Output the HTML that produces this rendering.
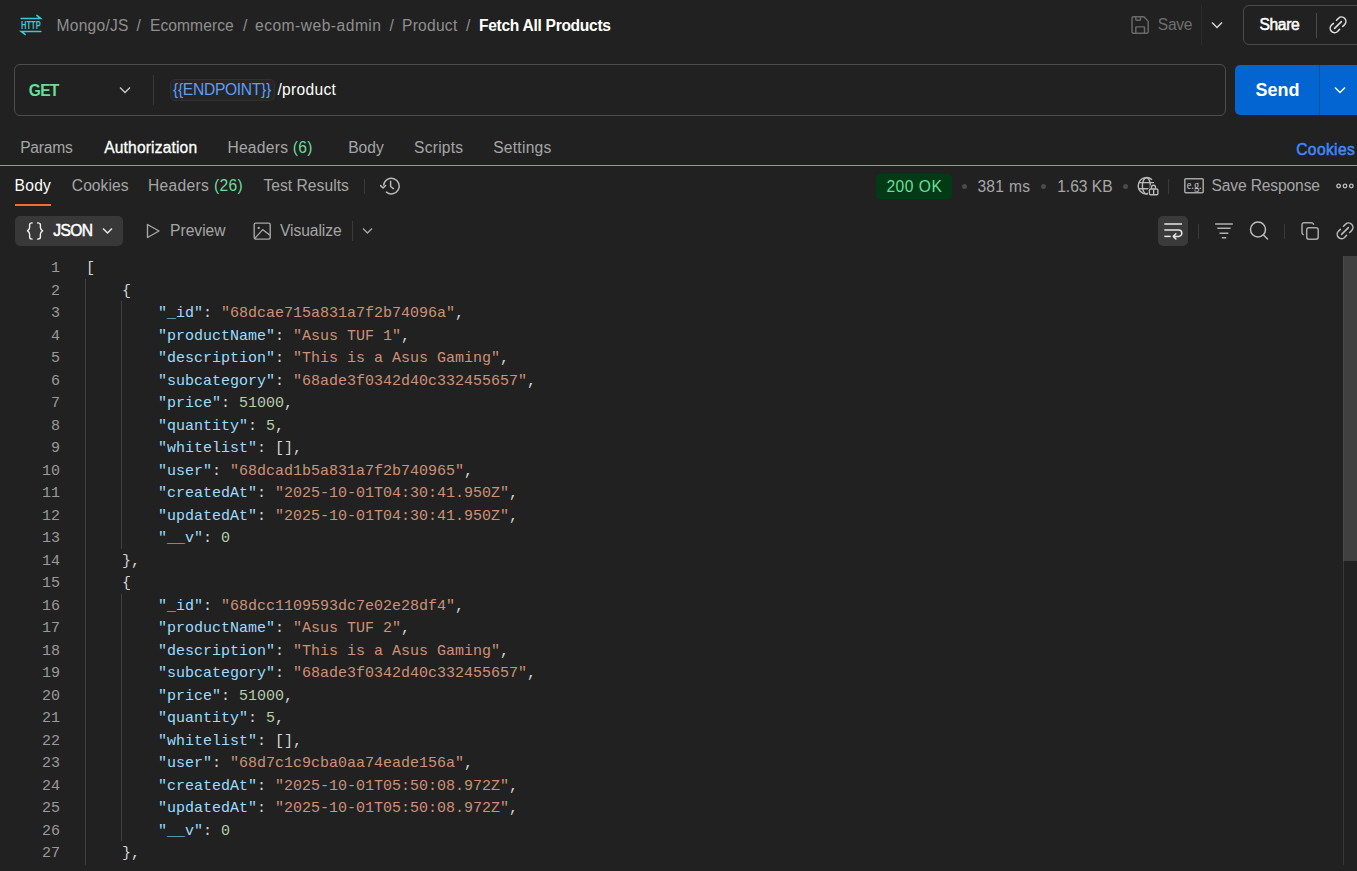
<!DOCTYPE html>
<html><head><meta charset="utf-8">
<style>
*{box-sizing:border-box;margin:0;padding:0}
html,body{width:1357px;height:871px;overflow:hidden;background:#212121;font-family:"Liberation Sans",sans-serif;color:#a6a6a6;position:relative}
.t{position:absolute;white-space:nowrap;line-height:20px}
.b{position:absolute}
svg{position:absolute;overflow:visible}
.code{position:absolute;left:0;top:258px;width:1343px;height:615px;font-family:"Liberation Mono",monospace;font-size:15px}
.ln{position:absolute;left:0;width:60px;text-align:right;color:#9a9a9a;line-height:22.5px;white-space:pre}
.cl{position:absolute;left:86px;color:#d4d4d4;white-space:pre;line-height:22.5px}
.k{color:#9cdcfe}
.s{color:#ce9178}
.n{color:#b5cea8}
.p{color:#d4d4d4}
.g{position:absolute;width:1px;background:#404040}
</style></head><body>
<!-- ===== top bar ===== -->
<svg style="left:20px;top:14px" width="24" height="22" viewBox="0 0 24 22">
  <g fill="none" stroke="#3fc8dc" stroke-width="1.6" stroke-linecap="round">
   <path d="M1.2 4.5H20.6L16.8 1.4"/>
   <path d="M20.8 17.5H1.3L5.1 20.4"/>
  </g>
  <text x="10.9" y="15.1" font-family="Liberation Sans" font-size="11.4" font-weight="bold" fill="#3fc8dc" text-anchor="middle" textLength="19.6" lengthAdjust="spacingAndGlyphs">HTTP</text>
</svg>
<!-- save icon -->
<svg style="left:1131px;top:16px" width="18" height="18" viewBox="0 0 18 18">
 <g fill="none" stroke="#6b6b6b" stroke-width="1.4" stroke-linejoin="round">
  <path d="M2.5 0.7H12.9L17.2 5.4V15.8Q17.2 17.2 15.8 17.2H2.4Q1 17.2 1 15.8V2.2Q1 0.7 2.5 0.7Z"/>
  <path d="M4.8 0.7V3.6Q4.8 4.3 5.5 4.3H8.8Q9.5 4.3 9.5 3.6V0.7"/>
  <path d="M4.8 17.2V11.6Q4.8 10.9 5.5 10.9H12.8Q13.5 10.9 13.5 11.6V17.2"/>
 </g>
</svg>
<div class="b" style="left:1201px;top:5px;width:1px;height:40px;background:#2b2b2b"></div>
<svg style="left:1211px;top:21px" width="12" height="8" viewBox="0 0 12 8"><path d="M1 1.5L6 6.5L11 1.5" fill="none" stroke="#d6d6d6" stroke-width="1.5"/></svg>
<div class="b" style="left:1243px;top:5px;width:130px;height:40px;border:1px solid #4a4a4a;border-radius:6px"></div>
<div class="b" style="left:1316px;top:13px;width:1px;height:25px;background:#4a4a4a"></div>
<svg style="left:1328px;top:15px" width="20" height="20" viewBox="0 0 20 20">
 <g fill="none" stroke="#e2e2e2" stroke-width="1.5" stroke-linecap="round">
  <path d="M6.6 13.4L13.4 6.6"/>
  <path d="M8.5 5.2L10.49 3.24A4.4 4.4 0 0 1 16.71 9.46L14.7 11.5"/>
  <path d="M5.4 8.4L3.39 10.24A4.4 4.4 0 0 0 9.61 16.46L11.6 14.3"/>
 </g>
</svg>
<!-- ===== url row ===== -->
<div class="b" style="left:14px;top:64px;width:1212px;height:52px;border:1px solid #4d4d4d;border-radius:6px"></div>
<svg style="left:119px;top:86px" width="12" height="8" viewBox="0 0 12 8"><path d="M1 1.5L6 6.5L11 1.5" fill="none" stroke="#c8c8c8" stroke-width="1.4"/></svg>
<div class="b" style="left:153px;top:75px;width:1px;height:30px;background:#3a3a3a"></div>
<div class="b" style="left:170px;top:79px;width:105px;height:22px;background:#262626;border:1px solid #303030;border-radius:5px"></div>
<div class="b" style="left:1235px;top:65px;width:130px;height:50px;background:#0265d2;border-radius:5px"></div>
<div class="b" style="left:1319px;top:65px;width:1px;height:50px;background:#0a4e9c"></div>
<svg style="left:1334px;top:86px" width="12" height="8" viewBox="0 0 12 8"><path d="M1 1.5L6 6.5L11 1.5" fill="none" stroke="#ffffff" stroke-width="1.4"/></svg>
<!-- ===== tabs ===== -->
<div class="b" style="left:0;top:165px;width:1357px;height:1px;background:#6a9ee6"></div>
<!-- ===== response tabs ===== -->
<div class="b" style="left:15px;top:204px;width:36px;height:2px;background:#f26b3a"></div>
<div class="b" style="left:364px;top:179px;width:1px;height:15px;background:#3a3a3a"></div>
<svg style="left:380px;top:177px" width="20" height="18" viewBox="0 0 20 18">
 <g fill="none" stroke="#b8b8b8" stroke-width="1.5" stroke-linecap="round" stroke-linejoin="round">
  <path d="M6.42 15.15A7.8 7.8 0 1 0 3.69 7.97"/>
  <path d="M0.6 8.6L3.1 11L5.6 8.5"/>
  <path d="M10.6 4.3V9.5L13.4 11.6"/>
 </g>
</svg>
<div class="b" style="left:876px;top:174px;width:76px;height:25px;background:#023a15;border-radius:4px"></div>
<div class="b" style="left:962px;top:184px;width:5px;height:5px;background:#4a4a4a;border-radius:50%"></div>
<div class="b" style="left:1041px;top:184px;width:5px;height:5px;background:#4a4a4a;border-radius:50%"></div>
<div class="b" style="left:1123px;top:184px;width:5px;height:5px;background:#4a4a4a;border-radius:50%"></div>
<svg style="left:1137px;top:177px" width="22" height="19" viewBox="0 0 22 19">
 <g fill="none" stroke="#b8b8b8" stroke-width="1.4">
  <path d="M15.04 2.75A8.2 8.2 0 1 0 10.78 16.9"/>
  <ellipse cx="9.4" cy="8.8" rx="4" ry="8.1"/>
  <path d="M2 5.6H17M1.5 11.8H16"/>
 </g>
 <g fill="#212121" stroke="#212121" stroke-width="3">
  <rect x="12.4" y="12" width="8.5" height="5.8" rx="1.3"/>
  <path d="M14.5 12V10.2A2 2 0 0 1 18.5 10.2V12"/>
 </g>
 <g fill="none" stroke="#b8b8b8" stroke-width="1.4">
  <rect x="12.4" y="12" width="8.5" height="5.8" rx="1.3"/>
  <path d="M14.5 12V10.2A2 2 0 0 1 18.5 10.2V12M16.65 12V17.8"/>
 </g>
</svg>
<div class="b" style="left:1168px;top:179px;width:1px;height:15px;background:#3a3a3a"></div>
<svg style="left:1184px;top:178px" width="20" height="16" viewBox="0 0 20 16">
 <rect x="0.8" y="0.8" width="18.4" height="14" rx="1" fill="none" stroke="#a6a6a6" stroke-width="1.5"/>
 <text x="10.2" y="10.8" font-family="Liberation Serif" font-size="11.5" fill="#c4c4c4" text-anchor="middle" textLength="15" lengthAdjust="spacingAndGlyphs">e.g.</text>
</svg>
<svg style="left:1336px;top:183px" width="19" height="6" viewBox="0 0 19 6">
 <g fill="none" stroke="#bdbdbd" stroke-width="1.3"><circle cx="2.6" cy="3" r="1.8"/><circle cx="9" cy="3" r="1.8"/><circle cx="15.3" cy="3" r="1.8"/></g>
</svg>
<!-- ===== format row ===== -->
<div class="b" style="left:15px;top:216px;width:108px;height:30px;background:#383838;border-radius:5px"></div>
<svg style="left:26px;top:222px" width="18" height="18" viewBox="0 0 18 18">
 <g fill="none" stroke="#f0f0f0" stroke-width="1.4" stroke-linecap="round" stroke-linejoin="round">
  <path d="M6.15 0.9Q3.6 0.9 3.6 2.7V5.6Q3.6 7.4 1.5 8.8Q3.6 10.2 3.6 12V15.3Q3.6 17.1 6.15 17.1"/>
  <path d="M11.5 0.9Q14.4 0.9 14.4 2.7V5.6Q14.4 7.4 16.6 8.8Q14.4 10.2 14.4 12V15.3Q14.4 17.1 11.5 17.1"/>
 </g>
</svg>
<svg style="left:102px;top:227px" width="12" height="8" viewBox="0 0 12 8"><path d="M1 1.5L5.5 6L10 1.5" fill="none" stroke="#e6e6e6" stroke-width="1.5"/></svg>
<svg style="left:146px;top:223px" width="15" height="16" viewBox="0 0 15 16"><path d="M1.5 1.5L13 8L1.5 14.5Z" fill="none" stroke="#a6a6a6" stroke-width="1.4" stroke-linejoin="round"/></svg>
<svg style="left:252px;top:221px" width="20" height="20" viewBox="0 0 20 20">
 <g fill="none" stroke="#a6a6a6" stroke-width="1.4">
  <rect x="2.2" y="2.1" width="16" height="16" rx="1.5"/>
  <path d="M2.6 17.6L10.8 8.6L18 14.2"/>
 </g>
 <circle cx="6.7" cy="6.9" r="1.2" fill="#a6a6a6"/>
</svg>
<div class="b" style="left:352px;top:221px;width:1px;height:20px;background:#3a3a3a"></div>
<svg style="left:362px;top:227px" width="12" height="8" viewBox="0 0 12 8"><path d="M1 1.5L5.5 6L10 1.5" fill="none" stroke="#a6a6a6" stroke-width="1.4"/></svg>
<div class="b" style="left:1158px;top:216px;width:30px;height:30px;background:#3a3a3a;border-radius:5px"></div>
<svg style="left:1163px;top:222px" width="20" height="18" viewBox="0 0 20 18">
 <g fill="none" stroke="#e6e6e6" stroke-width="1.5" stroke-linejoin="round">
  <path d="M1.3 2H19"/>
  <path d="M1.3 8H15.6A3.2 3.2 0 0 1 15.6 14.4H10.5"/>
  <path d="M12.9 11.8L10.3 14.4L12.9 17" stroke-linecap="round"/>
  <path d="M1.3 14.4H7.7"/>
 </g>
</svg>
<div class="b" style="left:1198px;top:224px;width:1px;height:15px;background:#3a3a3a"></div>
<svg style="left:1214px;top:222px" width="20" height="18" viewBox="0 0 20 18">
 <g fill="none" stroke="#b0b0b0" stroke-width="1.5">
  <path d="M1.1 2H18.8M3.3 6.2H16.6M5.5 11.3H14.4M7.8 15.7H12.2"/>
 </g>
</svg>
<svg style="left:1249px;top:220px" width="20" height="20" viewBox="0 0 20 20">
 <g fill="none" stroke="#bdbdbd" stroke-width="1.5" stroke-linecap="round">
  <circle cx="9" cy="9.5" r="7.5"/>
  <path d="M14.5 15L18.5 19"/>
 </g>
</svg>
<div class="b" style="left:1284px;top:224px;width:1px;height:15px;background:#3a3a3a"></div>
<svg style="left:1300px;top:222px" width="20" height="19" viewBox="0 0 20 19">
 <g fill="none" stroke="#a8a8a8" stroke-width="1.5" stroke-linecap="round" stroke-linejoin="round">
  <rect x="6.7" y="5.7" width="11.5" height="11.5" rx="2.2"/>
  <path d="M3.2 12.5Q2 12.1 2 10.6V2.9Q2 0.7 4.2 0.7H11.3Q13 0.7 13.6 2.2"/>
 </g>
</svg>
<svg style="left:1335px;top:221px" width="20" height="20" viewBox="0 0 20 20">
 <g fill="none" stroke="#bdbdbd" stroke-width="1.5" stroke-linecap="round">
  <path d="M6.6 13.4L13.4 6.6"/>
  <path d="M8.5 5.2L10.49 3.24A4.4 4.4 0 0 1 16.71 9.46L14.7 11.5"/>
  <path d="M5.4 8.4L3.39 10.24A4.4 4.4 0 0 0 9.61 16.46L11.6 14.3"/>
 </g>
</svg>
<!-- ===== code ===== -->
<div class="code">
<div class="g" style="left:85px;top:21px;height:586px"></div>
<div class="g" style="left:121px;top:43px;height:248px"></div>
<div class="g" style="left:121px;top:336px;height:247px"></div>
<div class="ln" style="top:0.0px">1</div><div class="cl" style="top:0.0px"><span class="p">[</span></div>
<div class="ln" style="top:22.5px">2</div><div class="cl" style="top:22.5px">    <span class="p">{</span></div>
<div class="ln" style="top:45.0px">3</div><div class="cl" style="top:45.0px">        <span class="k">"_id"</span><span class="p">: </span><span class="s">"68dcae715a831a7f2b74096a"</span><span class="p">,</span></div>
<div class="ln" style="top:67.5px">4</div><div class="cl" style="top:67.5px">        <span class="k">"productName"</span><span class="p">: </span><span class="s">"Asus TUF 1"</span><span class="p">,</span></div>
<div class="ln" style="top:90.0px">5</div><div class="cl" style="top:90.0px">        <span class="k">"description"</span><span class="p">: </span><span class="s">"This is a Asus Gaming"</span><span class="p">,</span></div>
<div class="ln" style="top:112.5px">6</div><div class="cl" style="top:112.5px">        <span class="k">"subcategory"</span><span class="p">: </span><span class="s">"68ade3f0342d40c332455657"</span><span class="p">,</span></div>
<div class="ln" style="top:135.0px">7</div><div class="cl" style="top:135.0px">        <span class="k">"price"</span><span class="p">: </span><span class="n">51000</span><span class="p">,</span></div>
<div class="ln" style="top:157.5px">8</div><div class="cl" style="top:157.5px">        <span class="k">"quantity"</span><span class="p">: </span><span class="n">5</span><span class="p">,</span></div>
<div class="ln" style="top:180.0px">9</div><div class="cl" style="top:180.0px">        <span class="k">"whitelist"</span><span class="p">: [],</span></div>
<div class="ln" style="top:202.5px">10</div><div class="cl" style="top:202.5px">        <span class="k">"user"</span><span class="p">: </span><span class="s">"68dcad1b5a831a7f2b740965"</span><span class="p">,</span></div>
<div class="ln" style="top:225.0px">11</div><div class="cl" style="top:225.0px">        <span class="k">"createdAt"</span><span class="p">: </span><span class="s">"2025-10-01T04:30:41.950Z"</span><span class="p">,</span></div>
<div class="ln" style="top:247.5px">12</div><div class="cl" style="top:247.5px">        <span class="k">"updatedAt"</span><span class="p">: </span><span class="s">"2025-10-01T04:30:41.950Z"</span><span class="p">,</span></div>
<div class="ln" style="top:270.0px">13</div><div class="cl" style="top:270.0px">        <span class="k">"__v"</span><span class="p">: </span><span class="n">0</span></div>
<div class="ln" style="top:292.5px">14</div><div class="cl" style="top:292.5px">    <span class="p">},</span></div>
<div class="ln" style="top:315.0px">15</div><div class="cl" style="top:315.0px">    <span class="p">{</span></div>
<div class="ln" style="top:337.5px">16</div><div class="cl" style="top:337.5px">        <span class="k">"_id"</span><span class="p">: </span><span class="s">"68dcc1109593dc7e02e28df4"</span><span class="p">,</span></div>
<div class="ln" style="top:360.0px">17</div><div class="cl" style="top:360.0px">        <span class="k">"productName"</span><span class="p">: </span><span class="s">"Asus TUF 2"</span><span class="p">,</span></div>
<div class="ln" style="top:382.5px">18</div><div class="cl" style="top:382.5px">        <span class="k">"description"</span><span class="p">: </span><span class="s">"This is a Asus Gaming"</span><span class="p">,</span></div>
<div class="ln" style="top:405.0px">19</div><div class="cl" style="top:405.0px">        <span class="k">"subcategory"</span><span class="p">: </span><span class="s">"68ade3f0342d40c332455657"</span><span class="p">,</span></div>
<div class="ln" style="top:427.5px">20</div><div class="cl" style="top:427.5px">        <span class="k">"price"</span><span class="p">: </span><span class="n">51000</span><span class="p">,</span></div>
<div class="ln" style="top:450.0px">21</div><div class="cl" style="top:450.0px">        <span class="k">"quantity"</span><span class="p">: </span><span class="n">5</span><span class="p">,</span></div>
<div class="ln" style="top:472.5px">22</div><div class="cl" style="top:472.5px">        <span class="k">"whitelist"</span><span class="p">: [],</span></div>
<div class="ln" style="top:495.0px">23</div><div class="cl" style="top:495.0px">        <span class="k">"user"</span><span class="p">: </span><span class="s">"68d7c1c9cba0aa74eade156a"</span><span class="p">,</span></div>
<div class="ln" style="top:517.5px">24</div><div class="cl" style="top:517.5px">        <span class="k">"createdAt"</span><span class="p">: </span><span class="s">"2025-10-01T05:50:08.972Z"</span><span class="p">,</span></div>
<div class="ln" style="top:540.0px">25</div><div class="cl" style="top:540.0px">        <span class="k">"updatedAt"</span><span class="p">: </span><span class="s">"2025-10-01T05:50:08.972Z"</span><span class="p">,</span></div>
<div class="ln" style="top:562.5px">26</div><div class="cl" style="top:562.5px">        <span class="k">"__v"</span><span class="p">: </span><span class="n">0</span></div>
<div class="ln" style="top:585.0px">27</div><div class="cl" style="top:585.0px">    <span class="p">},</span></div>
</div>
<!-- scrollbar -->
<div class="b" style="left:1343px;top:256px;width:1px;height:609px;background:#383838"></div>
<div class="b" style="left:1343px;top:256px;width:14px;height:305px;background:#404040;border-left:1px solid #4a4a4a"></div>
<div class="t" id="c1" style="left:56.60px;top:16.00px;font-size:15.6px;font-weight:400;color:#8f8f8f;letter-spacing:0.229px">Mongo/JS</div>
<div class="t" id="c2" style="left:136.40px;top:16.00px;font-size:15.6px;font-weight:400;color:#8f8f8f;letter-spacing:0.000px">/</div>
<div class="t" id="c3" style="left:150.00px;top:16.00px;font-size:15.6px;font-weight:400;color:#8f8f8f;letter-spacing:0.062px">Ecommerce</div>
<div class="t" id="c4" style="left:243.00px;top:16.00px;font-size:15.6px;font-weight:400;color:#8f8f8f;letter-spacing:0.000px">/</div>
<div class="t" id="c5" style="left:255.00px;top:16.00px;font-size:15.6px;font-weight:400;color:#8f8f8f;letter-spacing:0.492px">ecom-web-admin</div>
<div class="t" id="c6" style="left:389.40px;top:16.00px;font-size:15.6px;font-weight:400;color:#8f8f8f;letter-spacing:0.000px">/</div>
<div class="t" id="c7" style="left:402.00px;top:16.00px;font-size:15.6px;font-weight:400;color:#8f8f8f;letter-spacing:0.250px">Product</div>
<div class="t" id="c8" style="left:466.00px;top:16.00px;font-size:15.6px;font-weight:400;color:#8f8f8f;letter-spacing:0.000px">/</div>
<div class="t" id="c9" style="left:479.00px;top:16.00px;font-size:15.6px;font-weight:700;color:#ffffff;letter-spacing:-0.306px">Fetch All Products</div>
<div class="t" id="save" style="left:1157.80px;top:15.00px;font-size:15.6px;font-weight:400;color:#6e6e6e;letter-spacing:-0.267px">Save</div>
<div class="t" id="share" style="left:1259.40px;top:15.00px;font-size:15.6px;font-weight:400;color:#ffffff;letter-spacing:-0.325px;-webkit-text-stroke:0.5px #ffffff">Share</div>
<div class="t" id="get" style="left:28.80px;top:81.00px;font-size:15.6px;font-weight:700;color:#6bdd9a;letter-spacing:-0.800px">GET</div>
<div class="t" id="endp" style="left:173.00px;top:80.00px;font-size:15.6px;font-weight:400;color:#5c9ef8;letter-spacing:-0.291px">{{ENDPOINT}}</div>
<div class="t" id="prod" style="left:277.40px;top:80.00px;font-size:15.6px;font-weight:400;color:#ffffff;letter-spacing:0.314px">/product</div>
<div class="t" id="send" style="left:1255.60px;top:80.00px;font-size:18px;font-weight:700;color:#ffffff;letter-spacing:-0.033px">Send</div>
<div class="t" id="t1" style="left:20.20px;top:138.00px;font-size:15.6px;font-weight:400;color:#a6a6a6;letter-spacing:-0.220px">Params</div>
<div class="t" id="t2" style="left:104.20px;top:138.00px;font-size:15.6px;font-weight:400;color:#ffffff;letter-spacing:0.158px;-webkit-text-stroke:0.3px #ffffff">Authorization</div>
<div class="t" id="t3" style="left:227.40px;top:138.00px;font-size:15.6px;font-weight:400;color:#a6a6a6;letter-spacing:0.270px">Headers <span style="color:#6bdd9a">(6)</span></div>
<div class="t" id="t4" style="left:348.20px;top:138.00px;font-size:15.6px;font-weight:400;color:#a6a6a6;letter-spacing:0.000px">Body</div>
<div class="t" id="t5" style="left:414.00px;top:138.00px;font-size:15.6px;font-weight:400;color:#a6a6a6;letter-spacing:0.250px">Scripts</div>
<div class="t" id="t6" style="left:493.20px;top:138.00px;font-size:15.6px;font-weight:400;color:#a6a6a6;letter-spacing:0.257px">Settings</div>
<div class="t" id="cook" style="left:1296.20px;top:140.00px;font-size:15.6px;font-weight:400;color:#3d8bfd;letter-spacing:0.383px;-webkit-text-stroke:0.5px #3d8bfd">Cookies</div>
<div class="t" id="r1" style="left:14.60px;top:176.00px;font-size:15.6px;font-weight:400;color:#ffffff;letter-spacing:0.233px">Body</div>
<div class="t" id="r2" style="left:71.80px;top:176.00px;font-size:15.6px;font-weight:400;color:#a6a6a6;letter-spacing:0.067px">Cookies</div>
<div class="t" id="r3" style="left:148.00px;top:176.00px;font-size:15.6px;font-weight:400;color:#a6a6a6;letter-spacing:0.327px">Headers <span style="color:#6bdd9a">(26)</span></div>
<div class="t" id="r4" style="left:263.40px;top:176.00px;font-size:15.6px;font-weight:400;color:#a6a6a6;letter-spacing:0.045px">Test Results</div>
<div class="t" id="ok" style="left:886.40px;top:177.00px;font-size:15.6px;font-weight:400;color:#6bdd9a;letter-spacing:0.520px">200 OK</div>
<div class="t" id="ms" style="left:977.40px;top:177.00px;font-size:15.6px;font-weight:400;color:#a6a6a6;letter-spacing:0.300px">381 ms</div>
<div class="t" id="kb" style="left:1057.20px;top:177.00px;font-size:15.6px;font-weight:400;color:#a6a6a6;letter-spacing:0.000px">1.63 KB</div>
<div class="t" id="saver" style="left:1211.40px;top:176.00px;font-size:15.6px;font-weight:400;color:#a6a6a6;letter-spacing:-0.125px">Save Response</div>
<div class="t" id="json" style="left:53.20px;top:221.00px;font-size:15.6px;font-weight:400;color:#ffffff;letter-spacing:-0.567px;-webkit-text-stroke:0.5px #ffffff">JSON</div>
<div class="t" id="prev" style="left:170.00px;top:221.00px;font-size:15.6px;font-weight:400;color:#a6a6a6;letter-spacing:0.017px">Preview</div>
<div class="t" id="vis" style="left:280.00px;top:221.00px;font-size:15.6px;font-weight:400;color:#a6a6a6;letter-spacing:-0.062px">Visualize</div>
</body></html>
